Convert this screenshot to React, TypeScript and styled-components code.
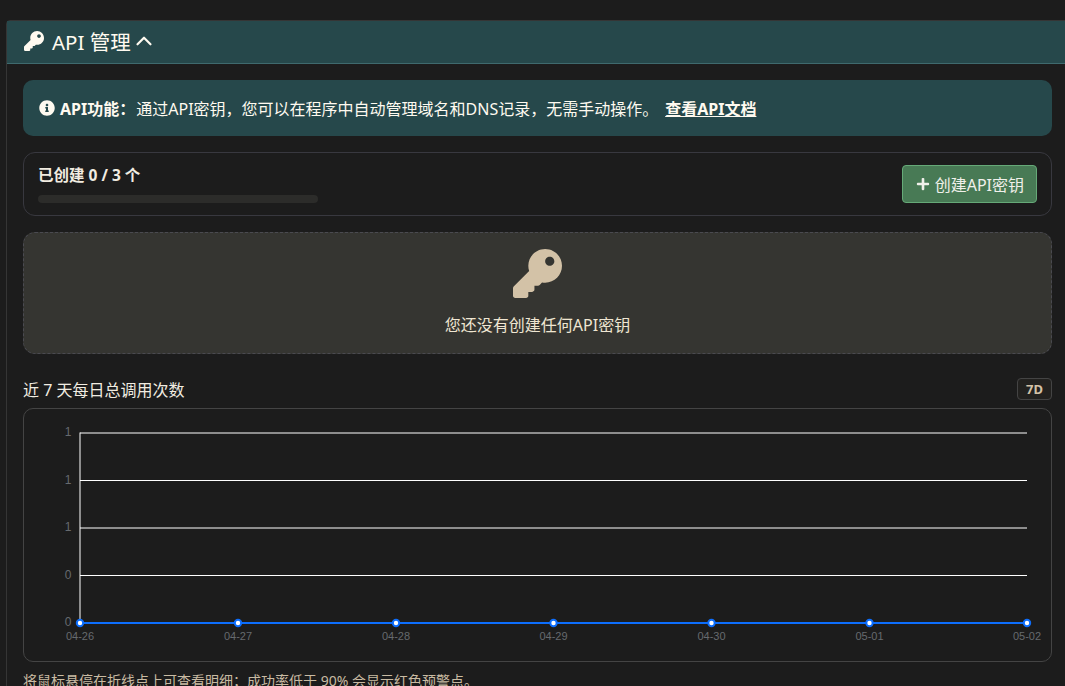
import React from "react";
import styled, { createGlobalStyle } from "styled-components";
import { FaKey, FaInfoCircle, FaPlus } from "react-icons/fa";
import { ChevronUp } from "lucide-react";

const GlobalStyle = createGlobalStyle`
  html, body {
    margin: 0;
    height: 100%;
    overflow: hidden;
    background: #1c1c1c;
  }
  body {
    font-family: "Noto Sans", "Noto Sans CJK SC", sans-serif;
    color: #f5f0e6;
  }
`;

const Page = styled.div`
  padding: 20px 0 0 6px;
`;

const Card = styled.section`
  width: 1063px;
  box-sizing: border-box;
  border: 1px solid #353535;
  border-radius: 4px 4px 0 0;
`;

const CardHeader = styled.header`
  display: flex;
  align-items: center;
  gap: 8px;
  height: 43px;
  box-sizing: border-box;
  padding: 0 17px 2px;
  background: #26484b;
  border-bottom: 1px solid #3f6a6e;
  font-size: 20.5px;
  color: #fffaf0;
`;

const HeaderChevron = styled(ChevronUp)`
  margin-left: -8px;
`;

const CardBody = styled.div`
  display: flex;
  flex-direction: column;
  padding: 16px;
`;

const Alert = styled.div`
  display: flex;
  align-items: center;
  height: 56px;
  box-sizing: border-box;
  padding: 0 16px;
  background: #26484b;
  border-radius: 10px;
  font-size: 16px;
  color: #fffaf0;
  white-space: pre;

  svg {
    margin-right: 5px;
  }
`;

const AlertStrong = styled.strong`
  font-weight: 700;
  margin-right: 1px;
`;

const DocLink = styled.a`
  font-weight: 700;
  text-decoration: underline;
  color: #fffaf0;
  margin-left: 7px;
`;

const QuotaBox = styled.div`
  display: flex;
  align-items: center;
  justify-content: space-between;
  height: 64px;
  box-sizing: border-box;
  margin-top: 16px;
  padding: 0 14px;
  border: 1px solid #38383f;
  border-radius: 12px;
`;

const Quota = styled.div`
  display: flex;
  flex-direction: column;
  gap: 10px;
  width: 280px;
`;

const QuotaText = styled.div`
  font-size: 15.5px;
  font-weight: 700;
  line-height: 20px;
  color: #f1ece1;
`;

const QuotaBar = styled.div`
  height: 8px;
  border-radius: 4px;
  background: #2c2c2a;
`;

const CreateButton = styled.button`
  display: flex;
  align-items: center;
  gap: 5px;
  height: 38px;
  box-sizing: border-box;
  padding: 0 12px 0 13px;
  background: #487a55;
  border: 1px solid #66aa78;
  border-radius: 4px;
  font-family: inherit;
  font-size: 16px;
  color: #f0f0ea;
`;

const EmptyState = styled.div`
  display: flex;
  flex-direction: column;
  align-items: center;
  height: 122px;
  box-sizing: border-box;
  margin-top: 16px;
  padding-top: 16px;
  background: #353531;
  border: 1px dashed #4a4a50;
  border-radius: 12px;
  font-size: 16px;
  color: #efe6d2;
`;

const EmptyIcon = styled(FaKey)`
  color: #d3c2a7;
`;

const EmptyText = styled.div`
  margin-top: 16px;
  line-height: 22px;
`;

const ChartHead = styled.div`
  display: flex;
  align-items: center;
  justify-content: space-between;
  margin-top: 24px;
  height: 22px;
`;

const ChartTitle = styled.div`
  font-size: 16px;
  color: #f1ece1;
`;

const RangeBadge = styled.span`
  display: flex;
  align-items: center;
  justify-content: center;
  width: 35px;
  height: 22px;
  box-sizing: border-box;
  border: 1px solid #444;
  border-radius: 4px;
  background: #22211f;
  font-size: 13px;
  font-weight: 700;
  color: #d3c2a7;
`;

const ChartBox = styled.div`
  height: 254px;
  margin-top: 8px;
  box-sizing: border-box;
  border: 1px solid #444;
  border-radius: 10px;
`;

const ChartSvg = styled.svg`
  display: block;
  font-family: "Liberation Sans", sans-serif;
  font-size: 11px;
`;

const AxisValue = styled.text`
  font-size: 12px;
  fill: #666a6e;
  text-anchor: end;
`;

const DayLabel = styled.text`
  fill: #666a6e;
  text-anchor: middle;
`;

const Hint = styled.p`
  margin: 9px 0 0;
  font-size: 14px;
  line-height: 20px;
  color: #c9bba3;
`;

const ticks = [
  { y: 24, label: "1" },
  { y: 71.5, label: "1" },
  { y: 119, label: "1" },
  { y: 166.5, label: "0" },
];

const days = [
  { x: 56, label: "04-26" },
  { x: 214, label: "04-27" },
  { x: 372, label: "04-28" },
  { x: 529.5, label: "04-29" },
  { x: 687.5, label: "04-30" },
  { x: 845.5, label: "05-01" },
  { x: 1003, label: "05-02" },
];

const LineChart: React.FC = () => (
  <ChartSvg width={1027} height={252} viewBox="0 0 1027 252">
    {ticks.map((t) => (
      <g key={t.y}>
        <line x1={56} x2={1003} y1={t.y} y2={t.y} stroke="#ffffff" strokeWidth={1} />
        <AxisValue x={47.5} y={t.y + 3}>
          {t.label}
        </AxisValue>
      </g>
    ))}
    <line x1={56} x2={56} y1={23.5} y2={214} stroke="#ffffff" strokeWidth={1} />
    <AxisValue x={47.5} y={217}>
      0
    </AxisValue>
    <line x1={56} x2={1003} y1={214} y2={214} stroke="#0d6efd" strokeWidth={2} />
    {days.map((d) => (
      <g key={d.label}>
        <circle cx={d.x} cy={214} r={3.2} fill="#ffffff" stroke="#0d6efd" strokeWidth={2} />
        <DayLabel x={d.x} y={231}>
          {d.label}
        </DayLabel>
      </g>
    ))}
  </ChartSvg>
);

const App: React.FC = () => (
  <Page>
    <GlobalStyle />
    <Card>
      <CardHeader>
        <FaKey size={20} />
        <span>API 管理</span>
        <HeaderChevron size={26} strokeWidth={2} />
      </CardHeader>
      <CardBody>
        <Alert>
          <FaInfoCircle size={16} />
          <AlertStrong>API功能：</AlertStrong>
          通过API密钥，您可以在程序中自动管理域名和DNS记录，无需手动操作。
          <DocLink>查看API文档</DocLink>
        </Alert>
        <QuotaBox>
          <Quota>
            <QuotaText>已创建 0 / 3 个</QuotaText>
            <QuotaBar />
          </Quota>
          <CreateButton>
            <FaPlus size={14} />
            创建API密钥
          </CreateButton>
        </QuotaBox>
        <EmptyState>
          <EmptyIcon size={49} />
          <EmptyText>您还没有创建任何API密钥</EmptyText>
        </EmptyState>
        <ChartHead>
          <ChartTitle>近 7 天每日总调用次数</ChartTitle>
          <RangeBadge>7D</RangeBadge>
        </ChartHead>
        <ChartBox>
          <LineChart />
        </ChartBox>
        <Hint>将鼠标悬停在折线点上可查看明细；成功率低于 90% 会显示红色预警点。</Hint>
      </CardBody>
    </Card>
  </Page>
);

export default App;
